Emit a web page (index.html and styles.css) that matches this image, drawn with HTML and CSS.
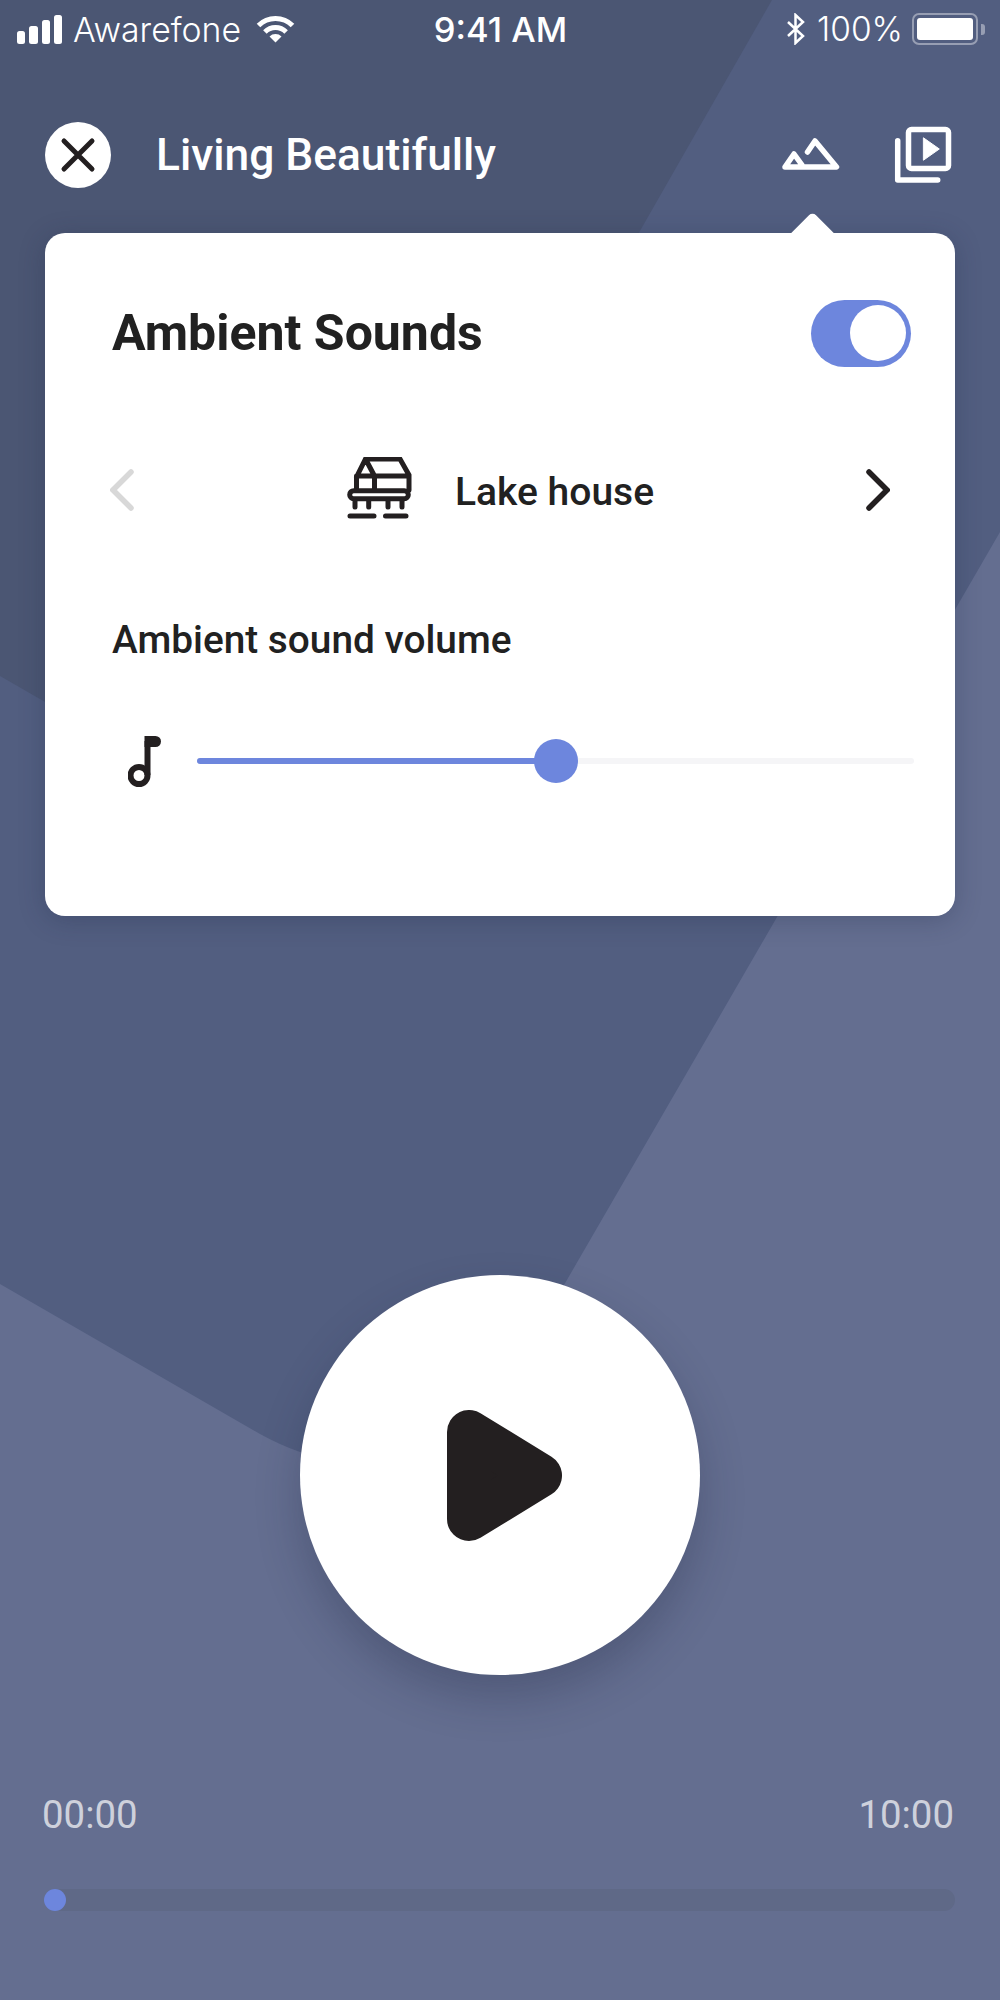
FILE: index.html
```html
<!DOCTYPE html>
<html lang="en">
  <head>
    <meta charset="UTF-8" />
    <meta name="viewport" content="width=device-width, initial-scale=1.0" />
    <title>Living Beautifully</title>
    <link rel="stylesheet" href="styles.css">
  </head>
  <body>
    <div class="screen">
      <svg class="backdrop" viewBox="0 0 1000 2000">
        <path class="shade-mid" d="M0 0H1000V532L564 1285L500 1500L300 1452Q280 1445 260 1434L0 1284Z" />
        <path class="shade-dark" d="M0 0H772L290 843L0 676Z" />
      </svg>

      <div class="status-bar">
        <div class="status-left">
          <div class="signal">
            <span class="bar bar-1"></span>
            <span class="bar bar-2"></span>
            <span class="bar bar-3"></span>
            <span class="bar bar-4"></span>
          </div>
          <span class="carrier">Awarefone</span>
          <svg class="wifi" width="40" height="28" viewBox="0 0 40 28">
            <path class="wifi-arc" d="M2.5 10.5A24 24 0 0 1 36.5 10.5" />
            <path class="wifi-arc" d="M8.9 16.9A15 15 0 0 1 30.1 16.9" />
            <path class="wifi-dot" d="M19.5 27.5L13.5 21.5A8.5 8.5 0 0 1 25.5 21.5Z" />
          </svg>
        </div>
        <div class="clock">9:41 AM</div>
        <div class="status-right">
          <svg class="bluetooth" width="20" height="32" viewBox="0 0 20 32">
            <path d="M2 9L17 23L9.5 30V2L17 9L2 23" />
          </svg>
          <span class="percent">100%</span>
          <div class="battery"><div class="battery-fill"></div></div>
          <div class="battery-nub"></div>
        </div>
      </div>

      <div class="top-bar">
        <button class="close-btn">
          <svg width="66" height="66" viewBox="0 0 66 66">
            <path d="M19 19L47 47M47 19L19 47" />
          </svg>
        </button>
        <h1 class="track-title">Living Beautifully</h1>
        <svg class="icon-mountain" width="58" height="34" viewBox="0 0 58 34">
          <path d="M25.5 15L33 4L54.5 30H3L12 17L20 28" />
        </svg>
        <svg class="icon-playlist" width="58" height="58" viewBox="0 0 58 58">
          <rect x="14.5" y="4.5" width="40" height="39" rx="3" />
          <path class="icon-solid" d="M29.7 13L45.3 24L29.7 35Z" />
          <path d="M3.7 15.7V55H43.7" />
        </svg>
      </div>

      <div class="sound-card">
        <div class="card-arrow"></div>
        <div class="card-head">
          <h2>Ambient Sounds</h2>
          <div class="toggle"><div class="toggle-knob"></div></div>
        </div>

        <div class="sound-picker">
          <svg class="chevron chevron-off" width="24" height="42" viewBox="0 0 24 42">
            <path d="M21 3L3 21L21 39" />
          </svg>
          <div class="sound-name">
            <svg class="icon-house" width="66" height="64" viewBox="0 0 66 64">
              <path d="M10.5 20L19.5 2H54L63 18M10.5 19H63M19.5 2L28.5 19M10.5 19V33M63 19V33M28.5 19V33" />
              <rect x="3.7" y="33.7" width="58.6" height="8" rx="4" />
              <path class="legs" d="M9 44V50M22.7 44V50M42 44V50M56 44V50" />
              <path class="dashes" d="M4 59H28M39.5 59H60" />
            </svg>
            <span class="sound-text">Lake house</span>
          </div>
          <svg class="chevron" width="24" height="42" viewBox="0 0 24 42">
            <path d="M3 3L21 21L3 39" />
          </svg>
        </div>

        <div class="volume-label">Ambient sound volume</div>

        <div class="volume-row">
          <svg class="icon-note" width="33" height="51" viewBox="0 0 33 51">
            <circle cx="11" cy="39.5" r="8.5" />
            <path d="M19.5 39V5" />
            <path class="note-flag" d="M16.5 0H27.5A5.5 5.5 0 0 1 27.5 11H16.5Z" />
          </svg>
          <div class="slider">
            <div class="slider-fill" style="width: 50%">
              <div class="slider-thumb"></div>
            </div>
          </div>
        </div>
      </div>

      <div class="player">
        <button class="play-btn">
          <svg width="115" height="131" viewBox="0 0 115 131">
            <path d="M22 22V109L93 65.5Z" />
          </svg>
        </button>
      </div>

      <div class="times">
        <span>00:00</span>
        <span>10:00</span>
      </div>
      <div class="progress">
        <div class="progress-thumb"></div>
      </div>
    </div>
  </body>
</html>
```

FILE: styles.css
```css
* {
  margin: 0;
  padding: 0;
  box-sizing: border-box;
  font-family: "Roboto", sans-serif;
}
body {
  background-color: #646e90;
}
button {
  border: none;
  cursor: pointer;
}
svg {
  display: block;
  flex-shrink: 0;
}
.screen {
  position: relative;
  width: 1000px;
  height: 2000px;
  overflow: hidden;
  background: #646e90;
}
.backdrop {
  position: absolute;
  top: 0;
  left: 0;
  width: 1000px;
  height: 2000px;
}
.shade-mid {
  fill: #525e80;
}
.shade-dark {
  fill: #4b5673;
}

/* status bar */
.status-bar {
  position: relative;
  display: grid;
  grid-template-columns: 1fr auto 1fr;
  align-items: center;
  height: 60px;
  padding: 0 15px 2px 17px;
  color: #fff;
}
.status-left,
.status-right {
  display: flex;
  align-items: center;
}
.status-right {
  justify-content: flex-end;
}
.signal {
  display: flex;
  align-items: flex-end;
  gap: 4px;
  height: 29px;
}
.bar {
  width: 8.25px;
  background: #fff;
  border-radius: 2.5px;
}
.bar-1 {
  height: 13px;
}
.bar-2 {
  height: 18px;
}
.bar-3 {
  height: 24px;
}
.bar-4 {
  height: 29px;
}
.carrier {
  margin-left: 11px;
  font-family: "Inter", sans-serif;
  font-size: 33.8px;
  font-weight: 300;
}
.wifi {
  margin-left: 15px;
}
.wifi-arc {
  fill: none;
  stroke: #fff;
  stroke-width: 5;
}
.wifi-dot {
  fill: #fff;
}
.clock {
  margin-left: -1px;
  font-family: "Inter", sans-serif;
  font-size: 34.5px;
  font-weight: 500;
}
.bluetooth {
  fill: none;
  stroke: #fff;
  stroke-width: 2.5;
}
.percent {
  margin-left: 11px;
  font-family: "Inter", sans-serif;
  font-size: 33.5px;
  font-weight: 300;
}
.battery {
  width: 66px;
  height: 32px;
  margin-left: 9px;
  padding: 3px;
  border: 2px solid rgba(255, 255, 255, 0.4);
  border-radius: 7px;
}
.battery-fill {
  height: 100%;
  background: #fff;
  border-radius: 3px;
}
.battery-nub {
  width: 4px;
  height: 11px;
  margin-left: 3px;
  background: rgba(255, 255, 255, 0.4);
  border-radius: 0 3px 3px 0;
}

/* top bar */
.top-bar {
  position: relative;
  display: flex;
  align-items: center;
  height: 66px;
  margin-top: 62px;
  padding: 0 48px 0 45px;
}
.close-btn {
  width: 66px;
  height: 66px;
  background: #fff;
  border-radius: 50%;
}
.close-btn path {
  fill: none;
  stroke: #231f20;
  stroke-width: 5;
  stroke-linecap: round;
}
.track-title {
  flex: 1;
  margin: 0 0 0 45px;
  color: #fff;
  font-size: 44.3px;
  font-weight: 500;
}
.icon-mountain {
  margin-top: -2px;
}
.icon-mountain path,
.icon-playlist path,
.icon-playlist rect {
  fill: none;
  stroke: #fff;
  stroke-width: 5.5;
  stroke-linecap: round;
  stroke-linejoin: round;
}
.icon-playlist {
  margin-left: 54px;
  margin-top: -2px;
}
.icon-playlist .icon-solid {
  fill: #fff;
  stroke-width: 1;
}

/* ambient sound card */
.sound-card {
  position: relative;
  height: 683px;
  margin: 45px 45px 0;
  padding: 67px 41px 0 67px;
  background: #fff;
  border-radius: 20px;
  box-shadow: 0 4px 26px rgba(30, 40, 70, 0.28);
}
.card-arrow {
  position: absolute;
  top: -14px;
  left: 750px;
  width: 35px;
  height: 35px;
  background: #fff;
  border-top-left-radius: 5px;
  transform: rotate(45deg);
}
.card-head {
  position: relative;
  display: flex;
  align-items: center;
  justify-content: space-between;
  height: 67px;
  padding-right: 3px;
}
.card-head h2 {
  margin-top: -2px;
  color: #212121;
  font-size: 50px;
  font-weight: 700;
}
.toggle {
  width: 100px;
  height: 67px;
  padding: 5px 5px 5px 39px;
  background: #6d86dd;
  border-radius: 34px;
}
.toggle-knob {
  width: 56px;
  height: 56px;
  background: #fff;
  border-radius: 50%;
}
.sound-picker {
  display: flex;
  align-items: center;
  justify-content: space-between;
  height: 62px;
  margin: 92px 24px 0 -2px;
}
.chevron path {
  fill: none;
  stroke: #231f20;
  stroke-width: 5.5;
  stroke-linecap: round;
  stroke-linejoin: miter;
}
.chevron-off path {
  stroke: #d8d8d8;
}
.sound-name {
  display: flex;
  align-items: center;
  gap: 43px;
  color: #212121;
  font-size: 39px;
  font-weight: 500;
}
.sound-text {
  margin-top: 3px;
}
.icon-house {
  margin-top: -3px;
}
.icon-house path,
.icon-house rect,
.icon-note path,
.icon-note circle {
  fill: none;
  stroke: #231f20;
  stroke-width: 5;
  stroke-linecap: round;
}
.volume-label {
  margin-top: 97px;
  color: #212121;
  font-size: 38.8px;
  line-height: 44px;
  font-weight: 500;
}
.volume-row {
  display: flex;
  align-items: center;
  height: 52px;
  margin-top: 73px;
}
.icon-note {
  margin-left: 16px;
}
.icon-note path,
.icon-note circle {
  stroke-width: 6;
  stroke-linecap: butt;
}
.icon-note .note-flag {
  fill: #231f20;
  stroke: none;
}
.slider {
  flex: 1;
  height: 6px;
  margin-left: 36px;
  background: #f5f5f7;
  border-radius: 3px;
}
.slider-fill {
  position: relative;
  height: 100%;
  background: #6d86dd;
  border-radius: 3px;
}
.slider-thumb {
  position: absolute;
  top: -19px;
  right: -22px;
  width: 44px;
  height: 44px;
  background: #6d86dd;
  border-radius: 50%;
}

/* player */
.player {
  position: relative;
  display: flex;
  justify-content: center;
  margin-top: 359px;
}
.play-btn {
  display: flex;
  align-items: center;
  justify-content: center;
  width: 400px;
  height: 400px;
  background: #fff;
  border-radius: 50%;
  box-shadow: 0 22px 44px rgba(30, 35, 60, 0.28);
}
.play-btn svg {
  margin-left: 9px;
}
.play-btn path {
  fill: #231f20;
  stroke: #231f20;
  stroke-width: 44;
  stroke-linejoin: round;
}
.times {
  position: relative;
  display: flex;
  justify-content: space-between;
  margin-top: 118px;
  padding: 0 46px 0 42px;
  color: rgba(255, 255, 255, 0.7);
  font-size: 38.4px;
  line-height: 44px;
}
.progress {
  position: relative;
  height: 22px;
  margin: 52px 45px 0 44px;
  background: #5f6987;
  border-radius: 11px;
}
.progress-thumb {
  width: 22px;
  height: 22px;
  background: #6d86dd;
  border-radius: 50%;
}
```
